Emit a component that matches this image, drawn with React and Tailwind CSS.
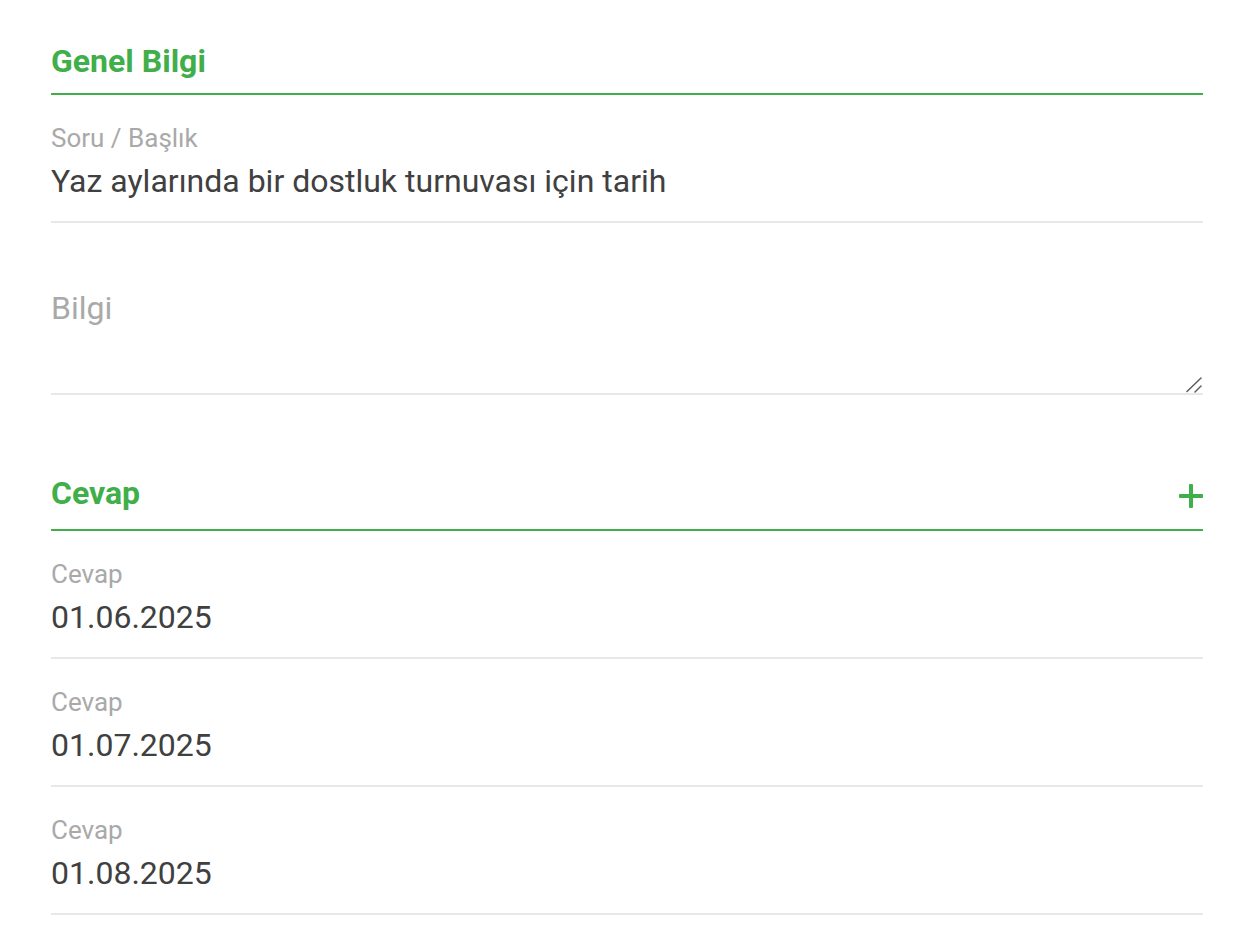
import React from "react";

const font = { fontFamily: "Roboto, 'Noto Sans', sans-serif" };

function Field({ label, value }) {
  return (
    <div className="pt-[28px] pb-[20px] border-b-2 border-[#e8e8e8]">
      <div className="text-[26px] leading-[30px] text-[#a9a9a9]">{label}</div>
      <div className="mt-[8px] text-[32px] leading-[40px] text-[#404040]">{value}</div>
    </div>
  );
}

export default function App() {
  return (
    <div className="bg-white min-h-[950px] w-[1248px]" style={font}>
      <div className="ml-[51px] w-[1152px]">
        <div className="pt-[41px] pb-[12px] border-b-2 border-[#40ae49]">
          <div className="text-[32px] leading-[40px] font-bold text-[#40ae49]">Genel Bilgi</div>
        </div>
        <Field label="Soru / Başlık" value="Yaz aylarında bir dostluk turnuvası için tarih" />
        <div className="relative">
          <textarea
            placeholder="Bilgi"
            className="block w-full h-[172px] pt-[65px] resize-none text-[32px] leading-[40px] text-[#404040] placeholder:text-[#a9a9a9] border-0 border-b-2 border-[#e8e8e8] outline-none bg-transparent"
            style={font}
          />
          <svg width="16" height="16" viewBox="0 0 16 16" className="absolute right-[1px] bottom-[2px] pointer-events-none">
            <line x1="1" y1="14.5" x2="15" y2="1" stroke="#5c5c5c" strokeWidth="1.5" strokeLinecap="round" />
            <line x1="9" y1="15" x2="15" y2="9" stroke="#5c5c5c" strokeWidth="1.5" strokeLinecap="round" />
          </svg>
        </div>
        <div className="mt-[78px] pb-[16px] border-b-2 border-[#40ae49] flex items-center justify-between">
          <div className="text-[32px] leading-[40px] font-bold text-[#40ae49]">Cevap</div>
          <svg width="24" height="24" viewBox="0 0 24 24" className="mt-[6px]">
            <rect x="0" y="10" width="24" height="4" rx="1" fill="#40ae49" />
            <rect x="10" y="0" width="4" height="24" rx="1" fill="#40ae49" />
          </svg>
        </div>
        <Field label="Cevap" value="01.06.2025" />
        <Field label="Cevap" value="01.07.2025" />
        <Field label="Cevap" value="01.08.2025" />
      </div>
    </div>
  );
}
